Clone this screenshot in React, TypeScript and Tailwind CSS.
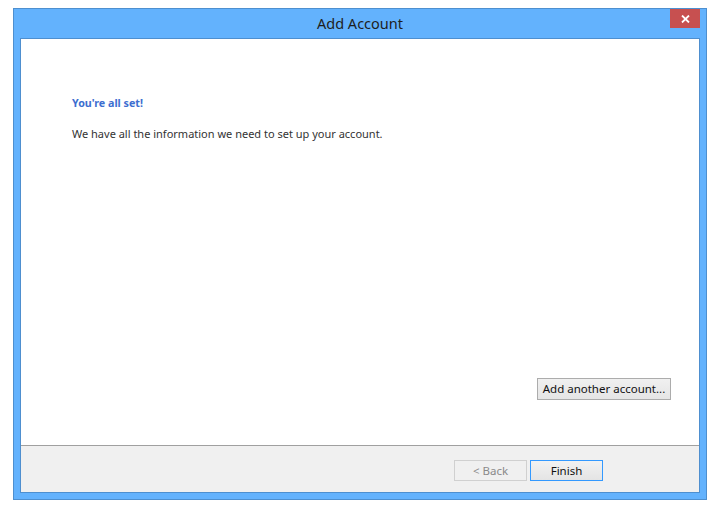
import React from "react";

export default function App() {
  return (
    <div className="w-[714px] h-[509px] bg-white relative" style={{ fontFamily: '"Noto Sans", "Open Sans", sans-serif' }}>
      <div className="absolute left-[13px] top-[8px] w-[694px] h-[492px] border border-[#4e8fcf] bg-[#63b2fd] flex flex-col px-[6px] pb-[6px]">
        <div className="h-[29px] flex items-center justify-center relative shrink-0">
          <span className="text-[14.5px] text-[#1e1e1e] leading-none">Add Account</span>
          <div className="absolute right-[0px] top-0 w-[30px] h-[19px] bg-[#c75050] flex items-center justify-center">
            <svg width="9" height="8" viewBox="0 0 9 8">
              <path d="M1 0.5 L8 7.5 M8 0.5 L1 7.5" stroke="white" strokeWidth="1.8" />
            </svg>
          </div>
        </div>
        <div className="flex-1 flex flex-col border border-[#4e8fcf]">
          <div className="flex-1 bg-white flex flex-col pl-[51px] pt-[56px] pr-[28px]">
            <div className="text-[10.7px] font-bold text-[#3d6ed0] leading-[16px]">You're all set!</div>
            <div className="text-[11px] text-[#333333] leading-[16px] mt-[15px]">We have all the information we need to set up your account.</div>
            <div className="flex-1" />
            <div className="flex justify-end mb-[45px]">
              <button className="w-[134px] h-[22px] border border-[#acacac] bg-gradient-to-b from-[#f0f0f0] to-[#e5e5e5] text-[11.5px] text-[#111] leading-none">Add another account...</button>
            </div>
          </div>
          <div className="h-[1px] bg-[#a0a0a0]" />
          <div className="h-[46px] bg-[#f0f0f0] flex items-start justify-end pt-[14px] pr-[96px] gap-[3px]">
            <button className="w-[73px] h-[21px] border border-[#d0d0d0] bg-[#f0f0f0] text-[11.5px] text-[#8a8a8a] leading-none">&lt; Back</button>
            <button className="w-[73px] h-[21px] border border-[#3399ff] bg-gradient-to-b from-[#f2f2f2] to-[#e4e4e4] text-[11.5px] text-[#111] leading-none">Finish</button>
          </div>
        </div>
      </div>
    </div>
  );
}
